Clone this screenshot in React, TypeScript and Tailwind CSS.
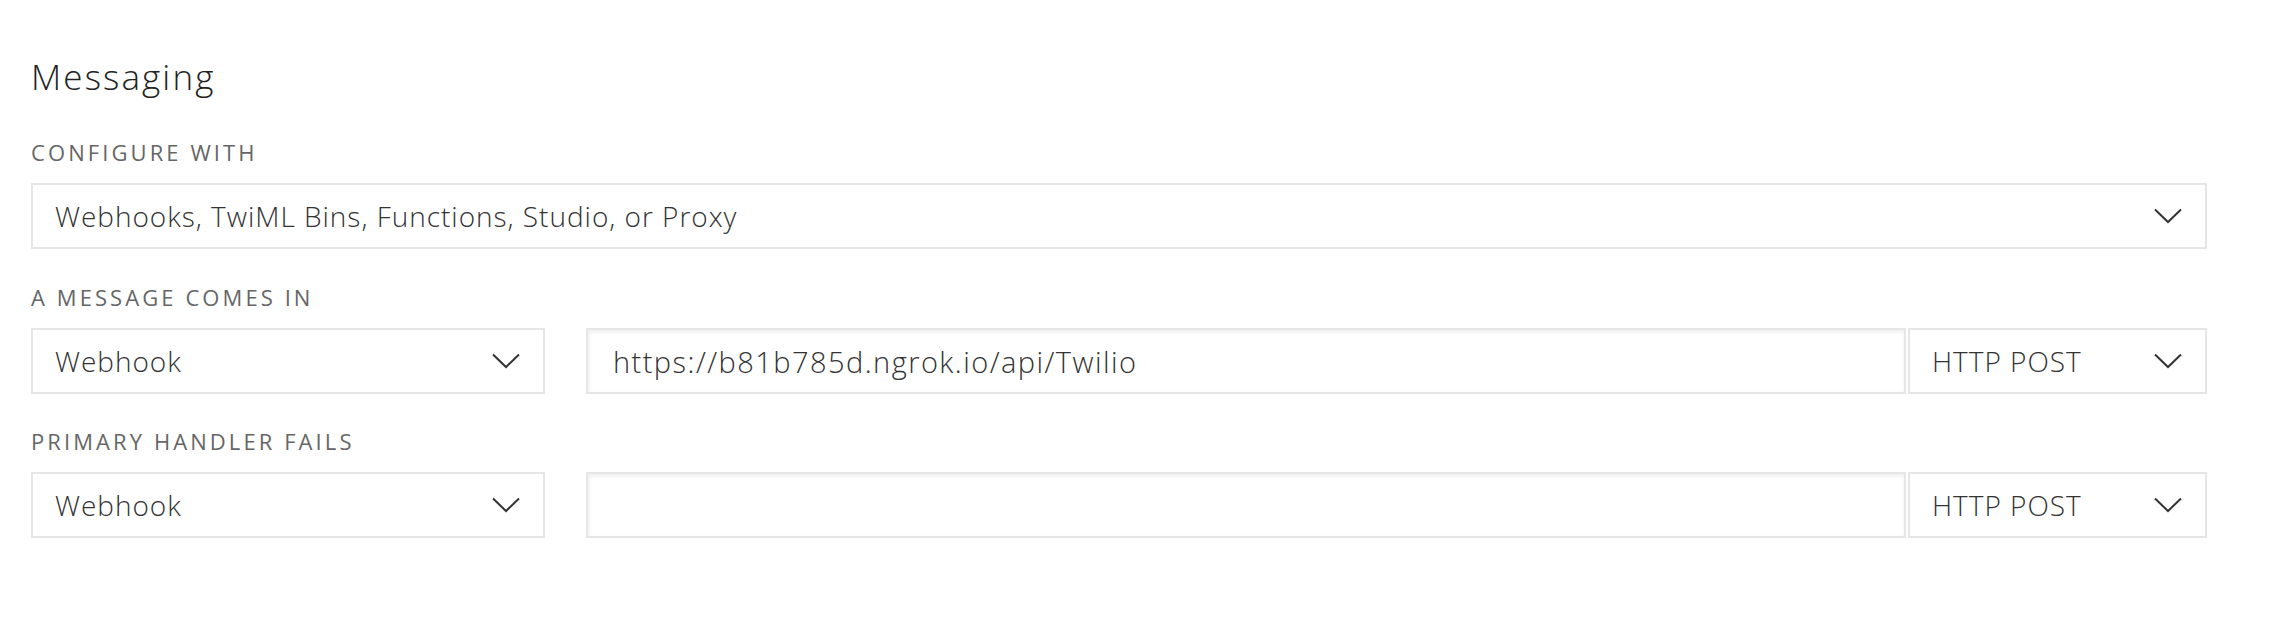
import React from 'react';

function Chevron() {
  return (
    <svg width="28" height="16" viewBox="0 0 28 16" fill="none" className="shrink-0">
      <path d="M1 1.5L14 14L27 1.5" stroke="#333" strokeWidth="2" />
    </svg>
  );
}

function Select({ value, className = '' }: { value: string; className?: string }) {
  return (
    <div
      className={`flex h-[66px] items-center justify-between border-2 border-[#e6e6e6] bg-white pl-[22px] pr-[23px] ${className}`}
    >
      <span className="text-[28px] leading-none font-light tracking-[0.035em] text-[#333]">{value}</span>
      <Chevron />
    </div>
  );
}

function Label({ children }: { children: React.ReactNode }) {
  return (
    <div className="mb-[18px] h-[25px] text-[22px] leading-[25px] tracking-[0.14em] text-[#666] uppercase">
      {children}
    </div>
  );
}

function HandlerRow({ url }: { url: string }) {
  return (
    <div className="flex">
      <Select value="Webhook" className="w-[514px]" />
      <div className="ml-[41px] flex h-[66px] flex-1 items-center border-2 border-[#e6e6e6] bg-white pl-[25px] shadow-[inset_1px_2px_4px_rgba(0,0,0,0.07)]">
        <span className="text-[29px] leading-none font-light tracking-[0.05em] text-[#333]">{url}</span>
      </div>
      <Select value="HTTP POST" className="ml-[2px] w-[299px]" />
    </div>
  );
}

export default function App() {
  return (
    <div
      className="h-[624px] w-full bg-white px-[31px] pt-[56px]"
      style={{ fontFamily: '"Open Sans", Lato, sans-serif' }}
    >
      <div className="w-[2176px]">
        <h2 className="h-[41px] text-[35px] leading-[41px] font-light tracking-[0.06em] text-[#222]">Messaging</h2>

        <div className="mt-[43px]">
          <Label>Configure with</Label>
          <Select value="Webhooks, TwiML Bins, Functions, Studio, or Proxy" />
        </div>

        <div className="mt-[36px]">
          <Label>A message comes in</Label>
          <HandlerRow url="https://b81b785d.ngrok.io/api/Twilio" />
        </div>

        <div className="mt-[35px]">
          <Label>Primary handler fails</Label>
          <HandlerRow url="" />
        </div>
      </div>
    </div>
  );
}
